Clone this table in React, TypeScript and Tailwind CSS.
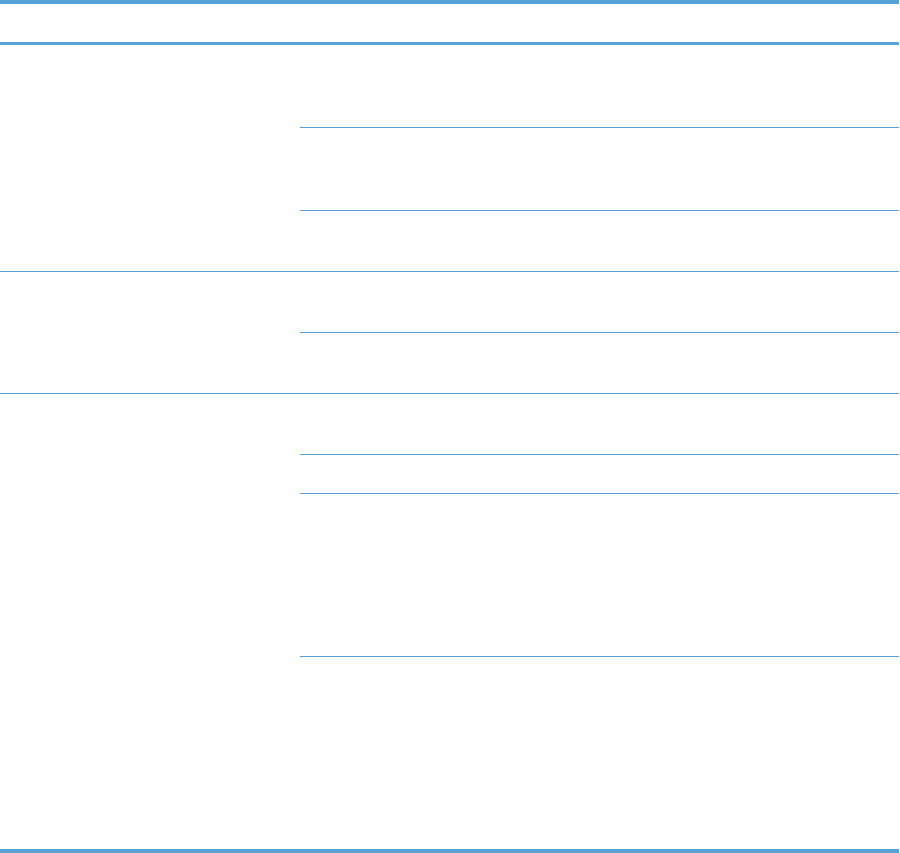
type Group = { rows: number[] };

// row heights include their 1px bottom rule (border-box)
const GROUPS: Group[] = [
  { rows: [83, 83, 60] },
  { rows: [61, 60] },
  { rows: [61, 39, 163, 192] },
];

function GroupRow({ group, last }: { group: Group; last: boolean }) {
  return (
    <div className={last ? "flex" : "flex border-b border-[#5b9fd3]"}>
      <div className="w-[300px] shrink-0" />
      <div className="flex-1 flex flex-col">
        {group.rows.map((h, i) => (
          <div
            key={i}
            className={i < group.rows.length - 1 ? "border-b border-[#5b9fd3]" : ""}
            style={{ height: h }}
          />
        ))}
      </div>
    </div>
  );
}

export default function App() {
  return (
    <div className="w-[900px] h-[853px] bg-white" style={{ fontFamily: "'Liberation Sans', Arial, sans-serif" }}>
      <div className="w-[899px] border-t-4 border-b-4 border-[#58a3d6]">
        {/* header */}
        <div className="h-[41px] border-b-[3px] border-[#58a3d6]" />
        {GROUPS.map((g, i) => (
          <GroupRow key={i} group={g} last={i === GROUPS.length - 1} />
        ))}
      </div>
    </div>
  );
}
